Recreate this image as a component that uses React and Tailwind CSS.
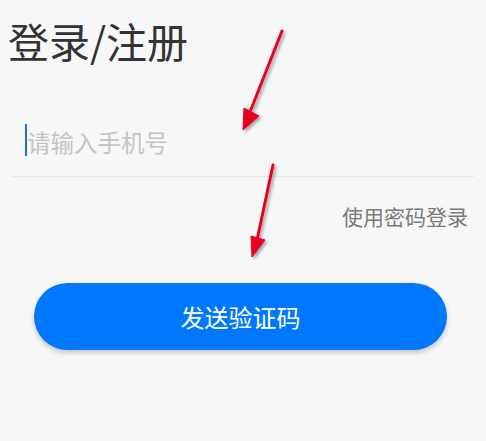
import React from "react";

export default function App() {
  return (
    <div className="relative w-[486px] h-[441px] bg-[#f7f7f7] overflow-hidden" style={{ fontFamily: '"Noto Sans CJK SC", "Noto Sans", sans-serif' }}>
      <div className="pt-[13px] pl-[8px]">
        <h1 className="text-[41px] leading-[54px] text-[#333333] font-normal">登录/注册</h1>
      </div>
      <div className="mt-[53px] mx-[12px] h-[57px] flex items-start border-b border-[#e6e6e6]">
        <div className="ml-[13px] mt-[4px] w-[2px] h-[32px] bg-[#1e6fd9]"></div>
        <span className="mt-[4px] text-[23.5px] leading-[37px] text-[#c4c4c4]">请输入手机号</span>
      </div>
      <div className="flex justify-end pr-[18px] mt-[24px]">
        <span className="text-[21px] leading-[30px] text-[#7a7a7a]">使用密码登录</span>
      </div>
      <div className="mt-[52px] mx-[34px] w-[413px] h-[67px] rounded-full bg-[#0078fe] flex items-center justify-center shadow-[0_3px_5px_rgba(0,0,0,0.2)]">
        <span className="text-[24px] text-white">发送验证码</span>
      </div>
      <svg className="absolute left-0 top-0 pointer-events-none" width="486" height="441">
        <defs>
          <filter id="sh" x="-50%" y="-50%" width="200%" height="200%">
            <feDropShadow dx="2" dy="2" stdDeviation="1.5" floodColor="#000" floodOpacity="0.35" />
          </filter>
        </defs>
        <g filter="url(#sh)" fill="#e8001c" stroke="#e8001c">
          <line x1="282" y1="31" x2="250" y2="112" strokeWidth="3" strokeLinecap="round" />
          <polygon points="243,130 244,108 259,116" strokeWidth="1" />
          <line x1="273" y1="165" x2="257" y2="240" strokeWidth="3" strokeLinecap="round" />
          <polygon points="252,257 251,236 265,240" strokeWidth="1" />
        </g>
      </svg>
    </div>
  );
}
